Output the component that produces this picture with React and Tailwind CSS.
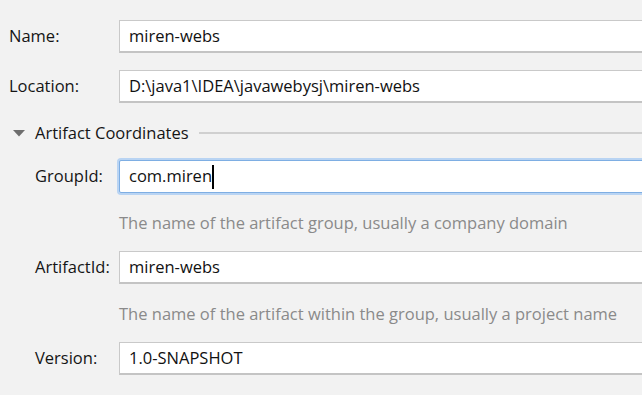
import React from 'react';

const font = { fontFamily: '"Open Sans", "Noto Sans", sans-serif' };

function Field({ value, focused, caret }) {
  if (focused) {
    return (
      <div className="flex-1 -mr-4 rounded-[2px] border border-[#7eaee3] shadow-[0_0_0_2px_#b9d4f3] bg-white h-[33px] flex items-center pl-[9px] text-[16.5px] text-[#111]">
        <span>{value}</span>
        {caret && <span className="w-[2px] h-[24px] bg-black" />}
      </div>
    );
  }
  return (
    <div className="flex-1 -mr-4 border border-[#c9c9c9] border-b-[2px] border-b-[#c4c4c4] bg-white h-[33px] flex items-center pl-[9px] text-[16.5px] text-[#111]">
      {value}
    </div>
  );
}

function Row({ label, indent, children, className = '' }) {
  return (
    <div className={`flex items-center ${className}`}>
      <div className={`${indent ? 'pl-[35px]' : 'pl-[9px]'} w-[119px] shrink-0 text-[16.5px] text-[#151515]`}>{label}</div>
      {children}
    </div>
  );
}

export default function App() {
  return (
    <div className="w-[642px] h-[395px] overflow-hidden bg-[#f2f2f2]" style={font}>
      <div className="pt-[20px]">
        <Row label="Name:">
          <Field value="miren-webs" />
        </Row>
        <Row label="Location:" className="mt-[17px]">
          <Field value="D:\java1\IDEA\javawebysj\miren-webs" />
        </Row>

        {/* Artifact Coordinates */}
        <div className="flex items-center mt-[19px] h-[22px]">
          <div className="pl-[13px] w-[35px] shrink-0">
            <svg width="12" height="7" viewBox="0 0 12 7">
              <polygon points="0,0 12,0 6,6.5" fill="#6e6e6e" />
            </svg>
          </div>
          <span className="text-[16.5px] text-[#151515]">Artifact Coordinates</span>
          <div className="flex-1 ml-[10px] h-[2px] bg-[#d0d0d0]" />
        </div>

        <Row label="GroupId:" indent className="mt-[16px]">
          <Field value="com.miren" focused caret />
        </Row>
        <div className="pl-[119px] mt-[18px] text-[16.5px] text-[#8a8a8a] leading-[24px]">
          The name of the artifact group, usually a company domain
        </div>

        <Row label="ArtifactId:" indent className="mt-[16px]">
          <Field value="miren-webs" />
        </Row>
        <div className="pl-[119px] mt-[18px] text-[16.5px] text-[#8a8a8a] leading-[24px]">
          The name of the artifact within the group, usually a project name
        </div>

        <Row label="Version:" indent className="mt-[16px]">
          <Field value="1.0-SNAPSHOT" />
        </Row>
      </div>
    </div>
  );
}
